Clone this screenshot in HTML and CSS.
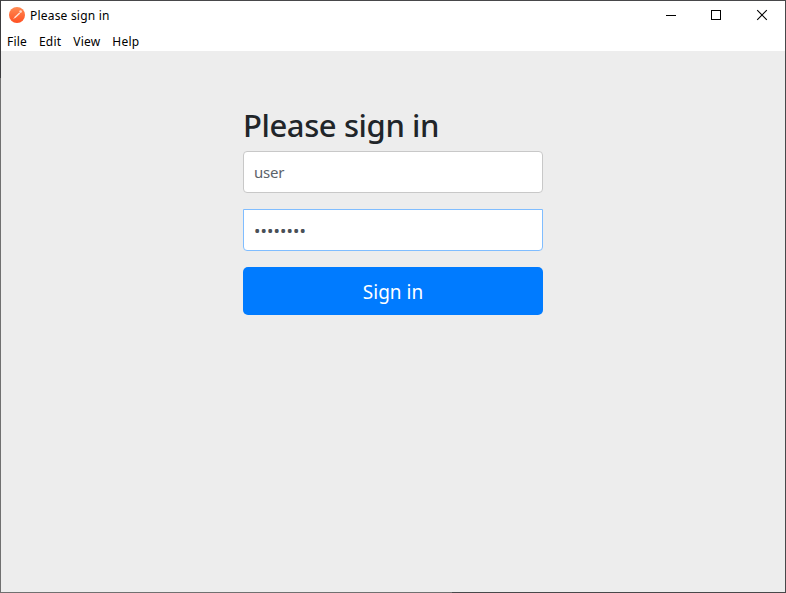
FILE: index.html
```
<!DOCTYPE html>
<html lang="en">
<head>
<meta charset="utf-8">
<title>Please sign in</title>
<link rel="stylesheet" href="styles.css">
</head>
<body>
<div class="window">
  <header class="titlebar">
    <svg class="logo" width="16" height="16" viewBox="0 0 16 16">
      <defs><linearGradient id="flame" x1="0" y1="0" x2="0" y2="1"><stop offset="0" stop-color="#ff8a52"/><stop offset="1" stop-color="#ff5022"/></linearGradient></defs>
      <circle cx="8" cy="8" r="8" fill="url(#flame)"/>
      <path d="M4 12.2 6.2 9.2 10.2 5.4 11.2 6.4 7.2 10.2Z" fill="#ffe3d6"/>
      <circle cx="11.6" cy="4.6" r="1.3" fill="#ffd9c8"/>
    </svg>
    <span class="title">Please sign in</span>
    <div class="controls">
      <svg width="46" height="29" viewBox="0 0 46 29" shape-rendering="crispEdges"><path d="M18 14.5h10" stroke="#000"/></svg>
      <svg width="45" height="29" viewBox="0 0 45 29" shape-rendering="crispEdges"><path d="M17.5 9.5h9v9h-9z" fill="none" stroke="#000"/></svg>
      <svg width="46" height="29" viewBox="0 0 46 29"><path d="M18.2 9.2l9.6 9.6M27.8 9.2l-9.6 9.6" stroke="#000" stroke-width="1.1"/></svg>
    </div>
  </header>
  <nav class="menubar">
    <span>File</span><span>Edit</span><span>View</span><span>Help</span>
  </nav>
  <main class="content">
    <form class="form">
      <h2 class="heading">Please sign in</h2>
      <div class="field field-user"><span class="value">user</span></div>
      <div class="field field-password"><span class="dots">••••••••</span></div>
      <button class="submit" type="button">Sign in</button>
    </form>
  </main>
</div>
</body>
</html>
```

FILE: styles.css
```
* { box-sizing: border-box; }
body { margin: 0; font-family: "Noto Sans", "Open Sans", sans-serif; }
.window {
  width: 786px; height: 593px; padding: 1px;
  display: flex; flex-direction: column;
  background:
    linear-gradient(#707070, #707070) 0 100% / 452px 1px no-repeat,
    linear-gradient(#3c3c3e 78px, #707070 78px) 0 0 / 1px 100% no-repeat,
    #48484a;
}
.titlebar { height: 29px; flex: none; display: flex; background: #fff; padding-left: 8px; }
.logo { margin-top: 6px; flex: none; }
.title { margin-left: 5px; font-size: 12px; line-height: 29px; letter-spacing: 0.2px; color: #000; white-space: nowrap; }
.controls { display: flex; margin-left: auto; }
.menubar { height: 21px; flex: none; display: flex; gap: 12px; padding: 1px 0 0 6px; background: #fff; color: #000; font-size: 12px; line-height: 20px; letter-spacing: 0.2px; white-space: nowrap; }
.menubar { padding-top: 2px; }
.content { flex: 1; display: flex; justify-content: center; align-items: flex-start; background: #ededed; padding-top: 55px; }
.form { width: 300px; display: flex; flex-direction: column; }
.heading { margin: 0 0 7px; font-size: 31px; font-weight: 500; line-height: 38px; letter-spacing: -0.4px; color: #212529; white-space: nowrap; }
.field { height: 42px; border: 1px solid #c8c8c8; border-radius: 4px; background: #fff; padding: 0 10px; color: #5c636a; font-size: 15px; line-height: 41px; letter-spacing: -0.2px; }
.field-password { margin-top: 16px; border-color: #80bdff; border-radius: 0 0 4px 4px; color: #495057; line-height: 42px; }
.dots { font-size: 17px; letter-spacing: 0.1px; }
.submit { margin-top: 16px; height: 48px; padding: 2px 0 0; border: 0; border-radius: 5px; background: #007bff; color: #fff; font: 19px/46px "Noto Sans", "Open Sans", sans-serif; }
```
